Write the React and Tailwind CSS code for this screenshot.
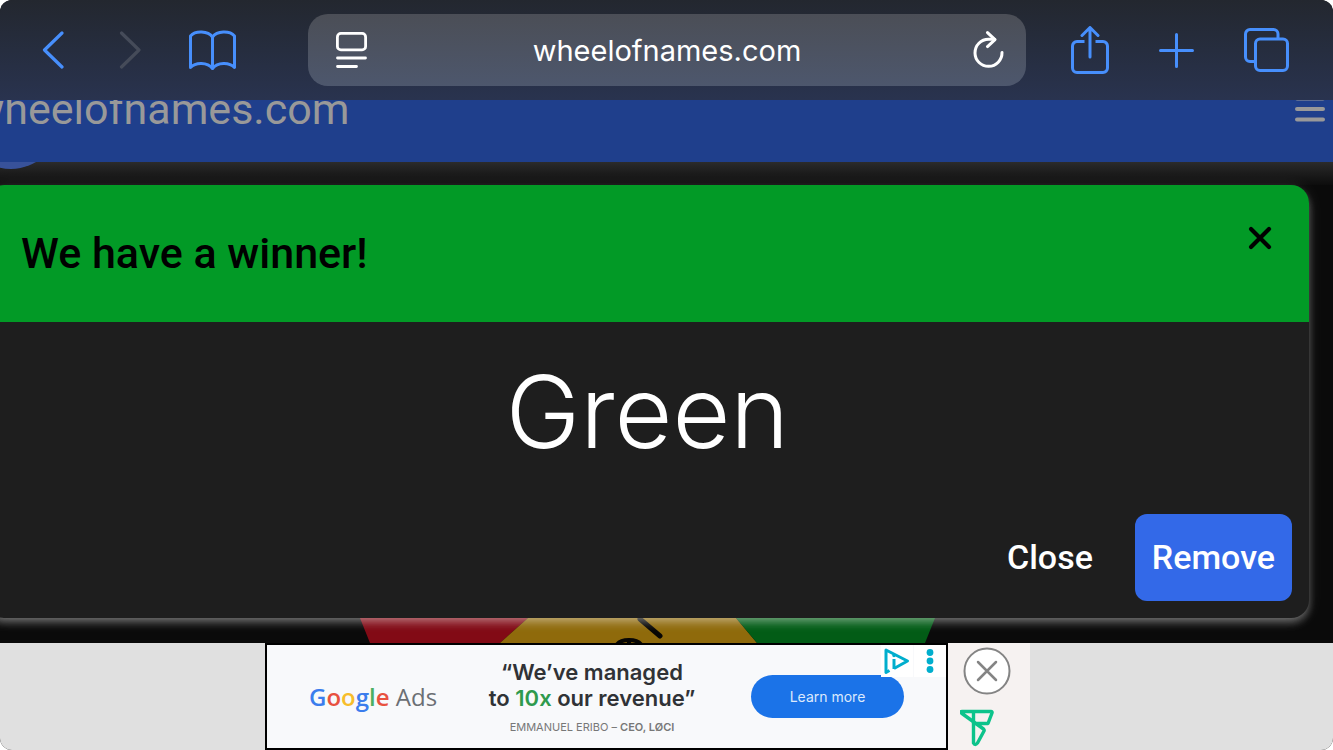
import { useState } from "react";

const ACCENT = "#478ffc";

function ToolbarButton({ label, disabled, children }) {
  return (
    <button type="button" aria-label={label} disabled={disabled} className="shrink-0">
      {children}
    </button>
  );
}

function BrowserBar() {
  return (
    <nav className="relative z-10 flex h-[100px] shrink-0 items-center bg-linear-to-b from-[#23272f] to-[#29334f] pr-11 pl-[42px]">
      <div className="mr-[71px] flex items-center">
        <ToolbarButton label="Back">
          <svg width="23" height="38" viewBox="0 0 23 38" fill="none" stroke={ACCENT} strokeWidth="3.200" strokeLinecap="round" strokeLinejoin="round">
            <path d="M20 2 2.500 19 20 36" />
          </svg>
        </ToolbarButton>
        <div className="ml-[54px] flex">
          <ToolbarButton label="Forward" disabled>
            <svg width="23" height="38" viewBox="0 0 23 38" fill="none" stroke="#454b59" strokeWidth="3.200" strokeLinecap="round" strokeLinejoin="round">
              <path d="M2.500 2 20 19 2.500 36" />
            </svg>
          </ToolbarButton>
        </div>
        <div className="ml-[46px] flex">
          <ToolbarButton label="Bookmarks">
            <svg width="49" height="40" viewBox="0 0 49 40" fill="none" stroke={ACCENT} strokeWidth="3" strokeLinecap="round" strokeLinejoin="round">
              <path d="M24.500 7C20 .8 7.500 .3 2.500 6v31.500c5-5.500 17-5.500 22 1 5-6.500 17-6.500 22-1V6c-5-5.700-17.500-5.200-22 1Z" />
              <path d="M24.500 7v31" />
            </svg>
          </ToolbarButton>
        </div>
      </div>

      <div className="flex h-[72px] min-w-0 flex-1 items-center rounded-[20px] bg-linear-to-b from-[#4b4e56] to-[#4d576d] pr-[22px] pl-7">
        <ToolbarButton label="Page settings">
          <svg width="31" height="36" viewBox="0 0 31 36" fill="none" stroke="#fff" strokeWidth="2.800" strokeLinecap="round">
            <rect x="1.400" y="1.400" width="28.200" height="16.500" rx="3.500" />
            <path d="M1.500 26h28M1.500 34.500h19" />
          </svg>
        </ToolbarButton>
        <input
          type="text"
          aria-label="Address"
          defaultValue="wheelofnames.com"
          className="min-w-0 flex-1 bg-transparent pt-0.5 pr-1.5 text-center font-['Inter',sans-serif] text-[29px] text-white outline-none"
        />
        <ToolbarButton label="Reload">
          <svg width="31" height="38" viewBox="0 0 31 38" fill="none" stroke="#fff" strokeWidth="3" strokeLinecap="round" strokeLinejoin="round">
            <path d="M29 21.500A13.500 13.500 0 1 1 15.500 8.300h6" />
            <path d="m14.500 1.600 7.500 7-7.500 7" />
          </svg>
        </ToolbarButton>
      </div>

      <div className="ml-[45px] flex items-center">
        <ToolbarButton label="Share">
          <svg width="38" height="48" viewBox="0 0 38 48" fill="none" stroke={ACCENT} strokeWidth="3" strokeLinecap="round" strokeLinejoin="round">
            <path strokeLinecap="butt" d="M13.500 15.500H6a4.500 4.500 0 0 0-4.500 4.500v22A4.500 4.500 0 0 0 6 46.500h26a4.500 4.500 0 0 0 4.500-4.500V20a4.500 4.500 0 0 0-4.500-4.500h-7.500" />
            <path d="M19 31V2M11 9.500l8-8 8 8" />
          </svg>
        </ToolbarButton>
        <div className="ml-[50px] flex">
          <ToolbarButton label="New tab">
            <svg width="35" height="35" viewBox="0 0 35 35" fill="none" stroke={ACCENT} strokeWidth="3" strokeLinecap="round">
              <path d="M17.500 1.500v32M1.500 17.500h32" />
            </svg>
          </ToolbarButton>
        </div>
        <div className="ml-[50px] flex">
          <ToolbarButton label="Tabs">
            <svg width="45" height="44" viewBox="0 0 45 44" fill="none" stroke={ACCENT} strokeWidth="3">
              <rect x="11.500" y="11" width="32" height="31.500" rx="4.500" />
              <path d="M11.500 33.500H6A4.500 4.500 0 0 1 1.500 29V6A4.500 4.500 0 0 1 6 1.500h23.500A4.500 4.500 0 0 1 34 6v5" />
            </svg>
          </ToolbarButton>
        </div>
      </div>
    </nav>
  );
}

function SiteHeader() {
  return (
    <header className="relative -mt-11 flex h-[106px] shrink-0 items-center justify-between bg-[#1f3f8c] pr-2 text-[#999]">
      <a href="#home" className="-ml-7 text-[43px] leading-none">
        wheelofnames.com
      </a>
      <button type="button" aria-label="Menu">
        <svg width="30" height="26" viewBox="0 0 30 26" stroke="currentColor" strokeWidth="4" strokeLinecap="round">
          <path d="M2 2.500h26M2 13h26M2 23.500h26" />
        </svg>
      </button>
    </header>
  );
}

function WinnerDialog({ name, onClose }) {
  return (
    <section
      role="dialog"
      aria-labelledby="winner-title"
      className="relative mr-6 -ml-3.5 flex flex-1 flex-col rounded-[18px] bg-[#1e1e1e] shadow-[0_4px_8px_-2px_rgba(255,255,255,0.3),0_6px_10px_rgba(255,255,255,0.14),0_2px_16px_rgba(255,255,255,0.12)]"
    >
      <div className="flex h-[137px] items-center justify-between rounded-t-[18px] bg-[#029a26] pr-[37px] pl-[35px] text-black">
        <h1 id="winner-title" className="text-[43px] font-medium">
          We have a winner!
        </h1>
        <button type="button" aria-label="Dismiss" onClick={onClose} className="mb-8">
          <svg width="24" height="24" viewBox="0 0 24 24" stroke="currentColor" strokeWidth="4.200" strokeLinecap="round">
            <path d="m3 3 18 18M21 3 3 21" />
          </svg>
        </button>
      </div>
      <p className="flex-1 pt-[30px] text-center font-['Inter',sans-serif] text-[100px] leading-[120px] font-light text-white">
        {name}
      </p>
      <div className="flex justify-end gap-6 p-[17px] text-[34px] font-medium text-white">
        <button type="button" onClick={onClose} className="h-[87px] px-[18px]">
          Close
        </button>
        <button type="button" onClick={onClose} className="h-[87px] rounded-xl bg-[#3369e8] px-[17px]">
          Remove
        </button>
      </div>
    </section>
  );
}

function Wheel() {
  return (
    <div className="flex h-[25px] shrink-0 justify-center overflow-hidden pr-[38px]">
      <svg width="575" height="25" viewBox="0 0 575 25">
        <path fill="#820a15" d="M0 0h168l-28 25H10Z" />
        <path fill="#8f6a0b" d="M168 0h208l21 25H140Z" />
        <path fill="#025c16" d="M376 0h199l-10 25H397Z" />
        <g fill="none" stroke="#070604" strokeWidth="5" strokeLinecap="round">
          <path d="m280 1 20 17" />
          <path strokeWidth="4" d="M256 28c4-8 22-8 26 0M269 23v4" />
        </g>
      </svg>
    </div>
  );
}

function AdBanner() {
  return (
    <aside className="flex h-[107px] shrink-0 justify-center bg-[#e0e0e0] pr-[38px]">
      <div className="relative flex w-[683px] items-center border-2 border-black bg-[#f8f9fb] pl-[42px]">
        <p className="w-[126px] font-['Open_Sans',sans-serif] text-[24px] whitespace-nowrap text-[#6b6f74]">
          <span className="font-semibold">
            <span className="text-[#3b7ded]">G</span>
            <span className="text-[#e8513f]">o</span>
            <span className="text-[#f7bd2b]">o</span>
            <span className="text-[#3b7ded]">g</span>
            <span className="text-[#4caf61]">l</span>
            <span className="text-[#e8513f]">e</span>
          </span>{" "}
          Ads
        </p>
        <div className="ml-[45px] w-[224px] text-center font-['Inter',sans-serif] whitespace-nowrap">
          <p className="text-[22px] leading-[26px] font-semibold text-[#303236]">
            “We’ve managed
            <br />
            to <span className="text-[#2e9a4d]">10x</span> our revenue”
          </p>
          <p className="mt-2 text-[11px] leading-4 text-[#777]">
            EMMANUEL ERIBO – <span className="font-semibold">CEO, LØCI</span>
          </p>
        </div>
        <button
          type="button"
          className="ml-[47px] h-[43px] w-[153px] rounded-full bg-[#1b73e8] font-['Inter',sans-serif] text-[14px] text-[#dce9fc]"
        >
          Learn more
        </button>
        <div className="absolute top-0 right-0 flex h-8 gap-px">
          <a href="#adchoices" aria-label="AdChoices" className="w-8 bg-white">
            <svg width="32" height="32" viewBox="0 0 32 32" fill="none" stroke="#00aecd" strokeWidth="3" strokeLinejoin="round">
              <path d="M8.500 25.500 5 27.500V5l21.500 11-13.500 7.500" />
              <path d="M13 14v10" />
              <circle cx="13" cy="10.500" r="1.700" fill="#00aecd" stroke="none" />
            </svg>
          </a>
          <button type="button" aria-label="Ad options" className="w-8 bg-white">
            <svg width="32" height="32" viewBox="0 0 32 32" fill="#00aecd">
              <circle cx="16" cy="7.500" r="3.400" />
              <circle cx="16" cy="16" r="3.400" />
              <circle cx="16" cy="24.500" r="3.400" />
            </svg>
          </button>
        </div>
      </div>
      <div className="flex w-[82px] flex-col bg-[#f6f2f1] pt-1 pl-3">
        <button type="button" aria-label="Close ad" className="ml-[3px] w-12">
          <svg width="48" height="48" viewBox="0 0 48 48" fill="none" stroke="#848484" strokeWidth="2">
            <circle cx="24" cy="24" r="22.500" fill="#fff" />
            <path strokeWidth="2.500" strokeLinecap="round" d="m15 15 18 18M33 15 15 33" />
          </svg>
        </button>
        <svg className="mt-3.5" width="36" height="38" viewBox="0 0 36 38" fill="none" stroke="#0cc38b" strokeWidth="3.400" strokeLinejoin="round">
          <path d="M13.500 14.500h14.500L32 4Q32.500 2.500 31 2.500H2Q-.5 2.500 2 4.500L23.500 20Q24.500 21 24 22L17.500 34Q15 37 13.500 34Z" />
          <path d="M13.500 2.500v12" />
        </svg>
      </div>
    </aside>
  );
}

export default function App() {
  const [open, setOpen] = useState(true);

  return (
    <div className="flex min-h-screen flex-col overflow-hidden rounded-xl bg-[#0a0a0a] font-['Roboto',sans-serif]">
      <BrowserBar />
      <SiteHeader />
      <div className="h-[23px] shrink-0 overflow-hidden bg-linear-to-b from-[#2b2b2b] to-[#0d0d0d]">
        <svg width="36" height="8" viewBox="0 0 36 8">
          <circle cx="11" cy="-41" r="48" fill="#38529a" />
        </svg>
      </div>
      {open ? <WinnerDialog name="Green" onClose={() => setOpen(false)} /> : <div className="flex-1" />}
      <Wheel />
      <AdBanner />
    </div>
  );
}
